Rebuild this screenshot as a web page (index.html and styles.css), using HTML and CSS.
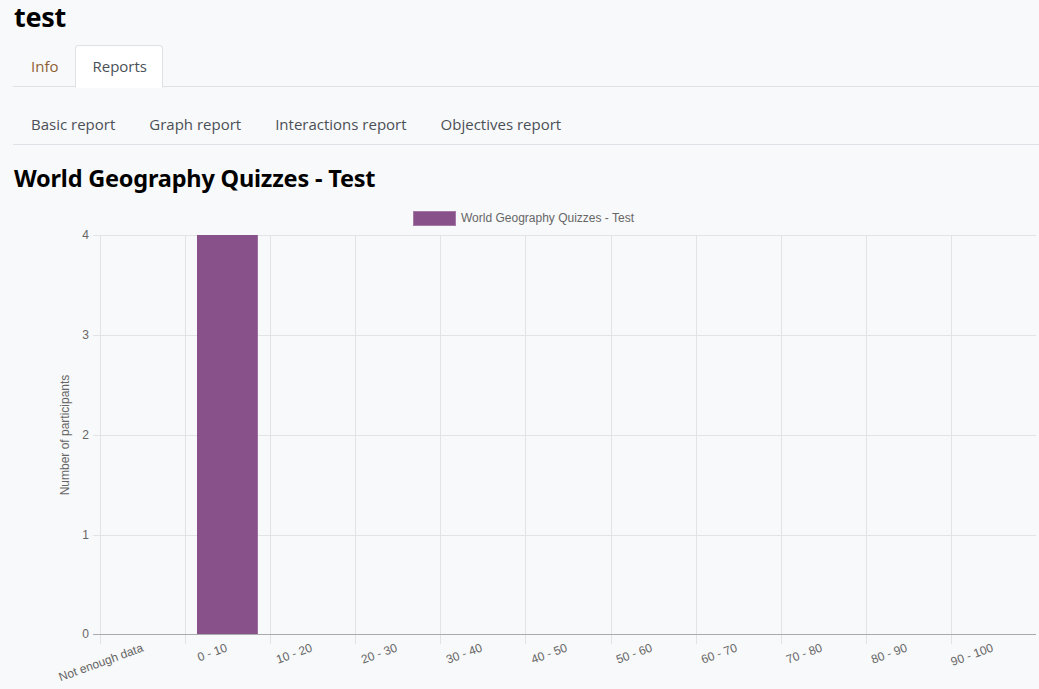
FILE: index.html
```html
<!DOCTYPE html>
<html>
<head>
<meta charset="utf-8">
<link rel="stylesheet" href="styles.css">
</head>
<body>
<div class="page">
  <h1 class="title">test</h1>
  <ul class="tabs">
    <li class="tab"><a class="tab-link info">Info</a></li>
    <li class="tab active"><a class="tab-link">Reports</a></li>
  </ul>
  <ul class="subtabs">
    <li class="subtab">Basic report</li>
    <li class="subtab">Graph report</li>
    <li class="subtab">Interactions report</li>
    <li class="subtab">Objectives report</li>
  </ul>
  <h2 class="quiz-title">World Geography Quizzes - Test</h2>
  <div class="chart">
    <svg class="chart-svg" width="1026" height="489" viewBox="13 200 1026 489" xmlns="http://www.w3.org/2000/svg">
      <!-- legend -->
      <rect x="413.5" y="211.5" width="42" height="14" fill="#88518a" stroke="#a57aa7" stroke-width="1"/>
      <text x="461" y="222" class="lbl">World Geography Quizzes - Test</text>
      <!-- horizontal grid -->
      <g stroke="#e2e3e4" stroke-width="1">
        <line x1="93" y1="235.5" x2="1036" y2="235.5"/>
        <line x1="93" y1="335.5" x2="1036" y2="335.5"/>
        <line x1="93" y1="435.5" x2="1036" y2="435.5"/>
        <line x1="93" y1="535.5" x2="1036" y2="535.5"/>
      </g>
      <!-- vertical grid -->
      <g stroke="#e2e3e4" stroke-width="1">
        <line x1="100.5" y1="235" x2="100.5" y2="644"/>
        <line x1="185.5" y1="235" x2="185.5" y2="644"/>
        <line x1="270.5" y1="235" x2="270.5" y2="644"/>
        <line x1="355.5" y1="235" x2="355.5" y2="644"/>
        <line x1="440.5" y1="235" x2="440.5" y2="644"/>
        <line x1="525.5" y1="235" x2="525.5" y2="644"/>
        <line x1="611.5" y1="235" x2="611.5" y2="644"/>
        <line x1="696.5" y1="235" x2="696.5" y2="644"/>
        <line x1="781.5" y1="235" x2="781.5" y2="644"/>
        <line x1="866.5" y1="235" x2="866.5" y2="644"/>
        <line x1="951.5" y1="235" x2="951.5" y2="644"/>
      </g>
      <!-- bar -->
      <rect x="197" y="235" width="61" height="399" fill="#88518a"/>
      <line x1="257.5" y1="235" x2="257.5" y2="634" stroke="#9d6d9f"/>
      <!-- zero line -->
      <line x1="93" y1="634.5" x2="1036" y2="634.5" stroke="#a9aaab"/>
      <!-- y ticks -->
      <g class="lbl" text-anchor="end">
        <text x="89" y="239">4</text>
        <text x="89" y="339">3</text>
        <text x="89" y="439">2</text>
        <text x="89" y="539">1</text>
        <text x="89" y="638">0</text>
      </g>
      <text class="lbl" transform="translate(69,435) rotate(-90)" text-anchor="middle">Number of participants</text>
      <!-- x labels -->
      <g class="lbl" text-anchor="end">
        <text transform="translate(144,651) rotate(-20)">Not enough data</text>
        <text transform="translate(228,651) rotate(-20)">0 - 10</text>
        <text transform="translate(313,651) rotate(-20)">10 - 20</text>
        <text transform="translate(398,651) rotate(-20)">20 - 30</text>
        <text transform="translate(483,651) rotate(-20)">30 - 40</text>
        <text transform="translate(568,651) rotate(-20)">40 - 50</text>
        <text transform="translate(653,651) rotate(-20)">50 - 60</text>
        <text transform="translate(738,651) rotate(-20)">60 - 70</text>
        <text transform="translate(823,651) rotate(-20)">70 - 80</text>
        <text transform="translate(908,651) rotate(-20)">80 - 90</text>
        <text transform="translate(994,651) rotate(-20)">90 - 100</text>
      </g>
    </svg>
  </div>
</div>
</body>
</html>
```
FILE: styles.css
```css
html, body {
  margin: 0;
  padding: 0;
  background: #f8f9fa;
  overflow: hidden;
}
body {
  font-family: "Open Sans", "Liberation Sans", sans-serif;
  color: #1d2125;
}
.page {
  padding: 1px 0 0 13px;
}
.title {
  margin: 0;
  font-family: "Noto Sans", "Liberation Sans", sans-serif;
  font-size: 27px;
  font-weight: 700;
  line-height: 31px;
  padding-left: 1px;
  color: #000;
  letter-spacing: -0.3px;
}
.tabs {
  list-style: none;
  margin: 13px 0 0 0;
  padding: 0;
  display: flex;
  border-bottom: 1px solid #dee2e6;
  height: 41px;
}
.tab {
  margin-bottom: -1px;
}
.tab-link {
  display: block;
  padding: 0 15px 0 16px;
  height: 41px;
  line-height: 41px;
  font-size: 15px;
  color: #495057;
  border: 1px solid transparent;
  border-top-left-radius: 4px;
  border-top-right-radius: 4px;
}
.tab-link.info {
  color: #8f5f34;
  padding-left: 17px;
  padding-right: 16px;
}
.tab.active .tab-link {
  background: #fff;
  border-color: #dee2e6 #dee2e6 #fff;
  color: #495057;
}
.subtabs {
  list-style: none;
  margin: 0;
  padding: 0;
  display: flex;
  border-bottom: 1px solid #dee2e6;
  height: 57px;
  align-items: flex-end;
}
.subtab {
  font-size: 15px;
  color: #4b5057;
  padding: 0 17px 8px 17px;
  line-height: 24px;
}
.subtab:first-child {
  padding-left: 18px;
}
.quiz-title {
  margin: 18px 0 0 0;
  font-family: "Noto Sans", "Liberation Sans", sans-serif;
  font-size: 23.5px;
  font-weight: 700;
  line-height: 30px;
  padding-left: 1px;
  color: #000;
  letter-spacing: -0.2px;
}
.chart {
  margin-top: 7px;
}
.chart-svg {
  display: block;
}
.lbl {
  font-family: "Liberation Sans", Arial, sans-serif;
  font-size: 12px;
  fill: #666;
}
```
